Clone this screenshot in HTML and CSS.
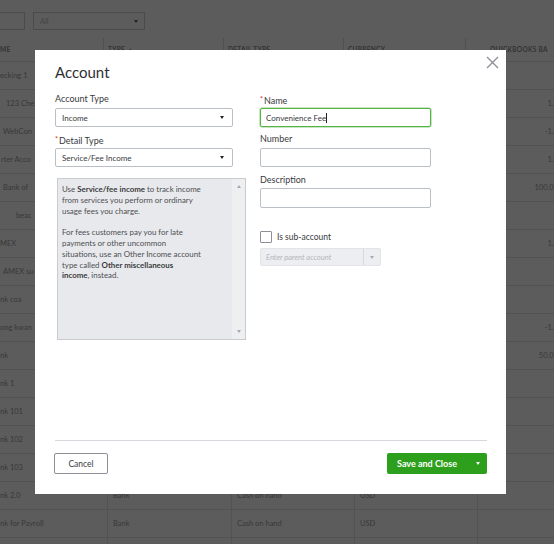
FILE: index.html
```html
<!DOCTYPE html>
<html>
<head>
<meta charset="utf-8">
<link rel="stylesheet" href="styles.css">
</head>
<body>
<div class="bg">
  <div class="toolbar">
    <div class="filter"></div>
    <div class="allsel"><span>All</span><span class="caret dark"></span></div>
  </div>
  <div class="thead">
    <div class="th">ME</div>
    <div class="th">TYPE ▲</div>
    <div class="th">DETAIL TYPE</div>
    <div class="th">CURRENCY</div>
    <div class="th last">QUICKBOOKS BA</div>
  </div>
  <div class="tbody">
    <div class="tr"><div class="td i0">ecking 1</div><div class="td"></div><div class="td"></div><div class="td"></div><div class="td num"></div></div>
    <div class="tr"><div class="td i6">123 Che</div><div class="td"></div><div class="td"></div><div class="td"></div><div class="td num">1.0</div></div>
    <div class="tr"><div class="td i3">WebCon</div><div class="td"></div><div class="td"></div><div class="td"></div><div class="td num">-1.0</div></div>
    <div class="tr"><div class="td i1">rter Acco</div><div class="td"></div><div class="td"></div><div class="td"></div><div class="td num">1.0</div></div>
    <div class="tr"><div class="td i3">Bank of</div><div class="td"></div><div class="td"></div><div class="td"></div><div class="td num">100.00</div></div>
    <div class="tr"><div class="td i16">beac</div><div class="td"></div><div class="td"></div><div class="td"></div><div class="td num"></div></div>
    <div class="tr"><div class="td i0">MEX</div><div class="td"></div><div class="td"></div><div class="td"></div><div class="td num">1.0</div></div>
    <div class="tr"><div class="td i3">AMEX su</div><div class="td"></div><div class="td"></div><div class="td"></div><div class="td num"></div></div>
    <div class="tr"><div class="td i0">nk coa</div><div class="td"></div><div class="td"></div><div class="td"></div><div class="td num"></div></div>
    <div class="tr"><div class="td i0">ong kwan</div><div class="td"></div><div class="td"></div><div class="td"></div><div class="td num">-1.0</div></div>
    <div class="tr"><div class="td i0">nk</div><div class="td"></div><div class="td"></div><div class="td"></div><div class="td num">50.00</div></div>
    <div class="tr"><div class="td i0">nk 1</div><div class="td"></div><div class="td"></div><div class="td"></div><div class="td num"></div></div>
    <div class="tr"><div class="td i0">nk 101</div><div class="td"></div><div class="td"></div><div class="td"></div><div class="td num"></div></div>
    <div class="tr"><div class="td i0">nk 102</div><div class="td"></div><div class="td"></div><div class="td"></div><div class="td num"></div></div>
    <div class="tr"><div class="td i0">nk 103</div><div class="td"></div><div class="td"></div><div class="td"></div><div class="td num"></div></div>
    <div class="tr"><div class="td i0">nk 2.0</div><div class="td">Bank</div><div class="td">Cash on hand</div><div class="td">USD</div><div class="td num"></div></div>
    <div class="tr"><div class="td i0">nk for Payroll</div><div class="td">Bank</div><div class="td">Cash on hand</div><div class="td">USD</div><div class="td num"></div></div>
    <div class="tr"><div class="td i0"></div><div class="td"></div><div class="td"></div><div class="td"></div><div class="td num"></div></div>
  </div>
</div>

<div class="modal">
  <svg class="close" width="13" height="13" viewBox="0 0 13 13"><path d="M1 1L12 12M12 1L1 12" stroke="#8d9096" stroke-width="1.4" fill="none"/></svg>
  <div class="title">Account</div>
  <div class="form">
    <div class="col">
      <div class="label">Account Type</div>
      <div class="select"><span>Income</span><span class="caret dark"></span></div>
      <div class="label gap6"><span class="req">*</span>Detail Type</div>
      <div class="select"><span>Service/Fee Income</span><span class="caret dark"></span></div>
      <div class="desc">
        <div class="desc-text">
          <p>Use <b>Service/fee income</b> to track income<br>from services you perform or ordinary<br>usage fees you charge.</p>
          <p>For fees customers pay you for late<br>payments or other uncommon<br>situations, use an Other Income account<br>type called <b>Other miscellaneous<br>income</b>, instead.</p>
        </div>
        <div class="scroll"><span class="tri up"></span><span class="tri down"></span></div>
      </div>
    </div>
    <div class="col">
      <div class="label"><span class="req">*</span>Name</div>
      <div class="input focus">Convenience Fee<span class="cursor"></span></div>
      <div class="label gap6">Number</div>
      <div class="input"></div>
      <div class="label gap7">Description</div>
      <div class="input tall"></div>
      <div class="check-row"><span class="box"></span><span>Is sub-account</span></div>
      <div class="combo"><span class="ph">Enter parent account</span><span class="combo-btn"><span class="caret gray"></span></span></div>
    </div>
  </div>
  <div class="footer">
    <div class="btn cancel">Cancel</div>
    <div class="btn save"><span>Save and Close</span><span class="caret white"></span></div>
  </div>
</div>
</body>
</html>
```
FILE: styles.css
```css
html, body {
  margin: 0;
  padding: 0;
}
body {
  width: 554px;
  height: 544px;
  overflow: hidden;
  position: relative;
  background: #5c5c5c;
  font-family: Lato, "Open Sans", sans-serif;
}
.bg {
  height: 544px;
  overflow: hidden;
  color: #383838;
  font-size: 7.5px;
}
.toolbar {
  display: flex;
  gap: 8px;
  padding-top: 12px;
}
.filter {
  width: 25px;
  height: 18px;
  box-sizing: border-box;
  border: 1px solid #4b4b4b;
  border-left: none;
}
.allsel {
  width: 112px;
  height: 18px;
  box-sizing: border-box;
  border: 1px solid #4b4b4b;
  display: flex;
  align-items: center;
  justify-content: space-between;
  padding: 0 6px;
  color: #454545;
}
.thead {
  margin-top: 8px;
  display: grid;
  grid-template-columns: 104px 120px 120px 122px 88px;
  height: 23px;
  border-bottom: 1px solid #525252;
  width: 554px;
  overflow: hidden;
}
.th {
  border-right: 1px solid #505050;
  display: flex;
  align-items: center;
  padding-left: 4px;
  font-size: 6.5px;
  font-weight: bold;
  letter-spacing: 0.3px;
  color: #333;
  white-space: nowrap;
  overflow: hidden;
}
.th:first-child {
  padding-left: 0;
}
.th.last {
  border-right: none;
  padding-left: 24px;
}
.tbody {
  width: 554px;
  overflow: hidden;
}
.tr {
  display: grid;
  grid-template-columns: 108px 124px 123px 123px 84px;
  height: 28px;
  box-sizing: border-box;
  border-bottom: 1px solid #525252;
  width: 562px;
}
.td {
  border-right: 1px solid #535353;
  display: flex;
  align-items: center;
  padding-left: 5px;
  white-space: nowrap;
  overflow: hidden;
}
.td.num {
  border-right: none;
  justify-content: flex-end;
  padding-right: 4px;
}
.i0 { padding-left: 0; }
.i1 { padding-left: 1px; }
.i3 { padding-left: 3px; }
.i6 { padding-left: 6px; }
.i16 { padding-left: 16px; }

/* Modal */
.modal {
  position: absolute;
  left: 35px;
  top: 50px;
  width: 471px;
  height: 444px;
  box-sizing: border-box;
  background: #fff;
  padding: 0 19px 0 20px;
  display: flex;
  flex-direction: column;
  color: #393a3d;
}
.close {
  position: absolute;
  top: 6px;
  right: 7px;
}
.title {
  padding-top: 12px;
  font-size: 15px;
  line-height: 20px;
  height: 20px;
  margin-bottom: 11px;
  color: #2f3033;
}
.form {
  display: grid;
  grid-template-columns: 191px 171px;
  column-gap: 14px;
  flex: 1;
}
.col {
  display: flex;
  flex-direction: column;
}
.label {
  font-size: 9px;
  line-height: 12px;
  height: 12px;
  white-space: nowrap;
}
.gap6 { margin-top: 6px; }
.gap7 { margin-top: 7px; }
.req {
  color: #d52b1e;
  font-size: 7px;
  margin-right: 1px;
  vertical-align: 2px;
}
.select {
  margin-top: 3px;
  width: 178px;
  height: 19px;
  box-sizing: border-box;
  border: 1px solid #babec5;
  border-radius: 2px;
  padding: 0 8px 0 6px;
  display: flex;
  align-items: center;
  justify-content: space-between;
  font-size: 8px;
}
.caret {
  width: 0;
  height: 0;
  border-left: 2.5px solid transparent;
  border-right: 2.5px solid transparent;
  border-top: 3px solid #393a3d;
}
.caret.dark { border-top-color: #222; }
.caret.gray { border-top-color: #a8abb0; }
.caret.white { border-top-color: #fff; }
.desc {
  margin-top: 11px;
  margin-left: 2px;
  width: 189px;
  height: 162px;
  box-sizing: border-box;
  border: 1px solid #c9cbce;
  background: #e8e9ec;
  display: flex;
}
.desc-text {
  flex: 1;
  padding: 5px 0 0 4px;
  font-size: 7.9px;
  line-height: 10.8px;
  color: #4d4e52;
  white-space: nowrap;
}
.desc-text p {
  margin: 0 0 10.8px 0;
}
.desc-text b {
  color: #3a3b3e;
}
.scroll {
  width: 13px;
  background: #eeeff1;
  display: flex;
  flex-direction: column;
  justify-content: space-between;
  align-items: center;
  padding: 6px 0 6px;
}
.tri {
  width: 0;
  height: 0;
  border-left: 2.5px solid transparent;
  border-right: 2.5px solid transparent;
}
.tri.up { border-bottom: 3px solid #a6a8ac; }
.tri.down { border-top: 3px solid #a6a8ac; }
.input {
  margin-top: 3px;
  width: 171px;
  height: 19px;
  box-sizing: border-box;
  border: 1px solid #babec5;
  border-radius: 2px;
  padding-left: 5px;
  display: flex;
  align-items: center;
  font-size: 8px;
}
.input.focus {
  border-color: #57b248;
  box-shadow: 0 0 0 0.5px #8fd082;
}
.input.tall {
  margin-top: 2px;
  height: 20px;
}
.cursor {
  width: 1px;
  height: 10px;
  background: #222;
}
.check-row {
  margin-top: 23px;
  height: 12px;
  display: flex;
  align-items: center;
  gap: 5px;
  font-size: 8.5px;
}
.box {
  width: 12px;
  height: 12px;
  box-sizing: border-box;
  border: 1px solid #8d9096;
  border-radius: 1px;
  background: #fff;
}
.combo {
  margin-top: 5px;
  width: 121px;
  height: 18px;
  box-sizing: border-box;
  background: #eceef1;
  border: 1px solid #e2e4e7;
  border-radius: 2px;
  display: flex;
}
.ph {
  flex: 1;
  display: flex;
  align-items: center;
  padding-left: 5px;
  font-size: 7.5px;
  font-style: italic;
  color: #b3b6bb;
}
.combo-btn {
  width: 16px;
  border-left: 1px solid #d6d8dc;
  display: flex;
  align-items: center;
  justify-content: center;
}
.footer {
  border-top: 1px solid #d4d7dc;
  padding: 12px 0 20px;
  display: flex;
  justify-content: space-between;
}
.btn {
  height: 21px;
  box-sizing: border-box;
  border-radius: 2px;
  display: flex;
  align-items: center;
  font-size: 8.5px;
}
.cancel {
  margin-left: -1px;
  width: 54px;
  border: 1px solid #8d9096;
  justify-content: center;
  color: #393a3d;
}
.save {
  width: 100px;
  background: #2ca01c;
  color: #fff;
  font-weight: bold;
  font-size: 9px;
  justify-content: space-between;
  padding: 0 7px 0 10px;
}
```
